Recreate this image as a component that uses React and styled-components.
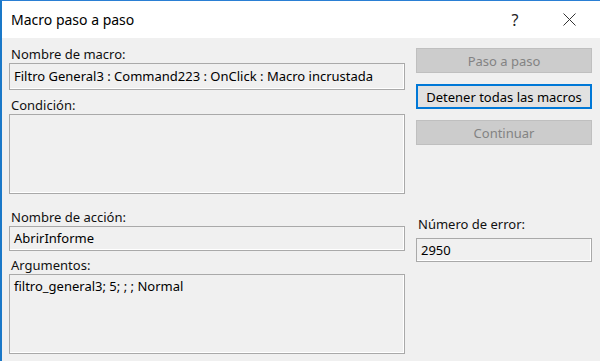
import styled, { createGlobalStyle } from "styled-components";

const GlobalStyle = createGlobalStyle`
  html, body {
    margin: 0;
    padding: 0;
    background: #f0f0f0;
  }
  * {
    box-sizing: border-box;
  }
`;

const Window = styled.div`
  width: 600px;
  height: 361px;
  overflow: hidden;
  display: flex;
  flex-direction: column;
  background: #f0f0f0;
  border-top: 1px solid #2a7fd4;
  border-left: 2px solid #1a78c8;
  font-family: "Noto Sans", "Open Sans", sans-serif;
  color: #000;
`;

const TitleBar = styled.div`
  height: 37px;
  background: #ffffff;
  display: flex;
  align-items: center;
  padding-left: 9px;
`;

const Title = styled.span`
  flex: 1;
  font-size: 14px;
  color: #000;
  padding-bottom: 1px;
`;

const TitleButton = styled.button`
  width: ${(p) => p.$w}px;
  height: 36px;
  border: none;
  background: transparent;
  display: flex;
  align-items: center;
  justify-content: center;
  padding: 0;
  font-family: inherit;
  font-size: 16px;
  color: #222;
`;

const Body = styled.div`
  flex: 1;
  display: flex;
  padding: 9px 0 0 7px;
  gap: 11px;
`;

const LeftColumn = styled.div`
  width: 396px;
  display: flex;
  flex-direction: column;
`;

const RightColumn = styled.div`
  width: 176px;
  display: flex;
  flex-direction: column;
  padding-top: 1px;
`;

const Field = styled.div`
  display: flex;
  flex-direction: column;
  margin-top: ${(p) => p.$top || 0}px;
`;

const Label = styled.label`
  font-size: 13px;
  line-height: 14px;
  height: 14px;
  margin-bottom: ${(p) => (p.$gap === undefined ? 2 : p.$gap)}px;
  padding-left: 2px;
  white-space: nowrap;
  color: #111;
`;

const TextBox = styled.div`
  height: ${(p) => p.$h}px;
  border: 1px solid #a9a9a9;
  box-shadow: inset -1px -1px 0 #ffffff;
  background: #f0f0f0;
  font-size: 13px;
  line-height: 15px;
  padding: ${(p) => (p.$multi ? "4px 4px" : "0 4px")};
  display: flex;
  align-items: ${(p) => (p.$multi ? "flex-start" : "center")};
  white-space: nowrap;
  overflow: hidden;
`;

const Buttons = styled.div`
  display: flex;
  flex-direction: column;
  gap: 11px;
`;

const DialogButton = styled.button`
  height: 25px;
  width: 100%;
  font-family: inherit;
  font-size: 13px;
  padding: 0;
  background: ${(p) => (p.$disabled ? "#cccccc" : "#e1e1e1")};
  color: ${(p) => (p.$disabled ? "#838383" : "#000000")};
  border: ${(p) => (p.$disabled ? "1px solid #bfbfbf" : "2px solid #0078d7")};
`;

const CloseIcon = () => (
  <svg width="13" height="13" viewBox="0 0 13 13">
    <path d="M0.5 0.5 L12.5 12.5 M12.5 0.5 L0.5 12.5" stroke="#333" strokeWidth="1" fill="none" />
  </svg>
);

export default function App() {
  return (
    <>
      <GlobalStyle />
      <Window>
        <TitleBar>
          <Title>Macro paso a paso</Title>
          <TitleButton $w={46}>?</TitleButton>
          <TitleButton $w={62}>
            <CloseIcon />
          </TitleButton>
        </TitleBar>
        <Body>
          <LeftColumn>
            <Field>
              <Label>Nombre de macro:</Label>
              <TextBox $h={27}>Filtro General3 : Command223 : OnClick : Macro incrustada</TextBox>
            </Field>
            <Field $top={8}>
              <Label>Condición:</Label>
              <TextBox $h={80} $multi />
            </Field>
            <Field $top={16}>
              <Label>Nombre de acción:</Label>
              <TextBox $h={25}>AbrirInforme</TextBox>
            </Field>
            <Field $top={7}>
              <Label>Argumentos:</Label>
              <TextBox $h={80} $multi>filtro_general3; 5; ; ; Normal</TextBox>
            </Field>
          </LeftColumn>
          <RightColumn>
            <Buttons>
              <DialogButton $disabled>Paso a paso</DialogButton>
              <DialogButton>Detener todas las macros</DialogButton>
              <DialogButton $disabled>Continuar</DialogButton>
            </Buttons>
            <Field $top={72}>
              <Label $gap={7}>Número de error:</Label>
              <TextBox $h={24}>2950</TextBox>
            </Field>
          </RightColumn>
        </Body>
      </Window>
    </>
  );
}
